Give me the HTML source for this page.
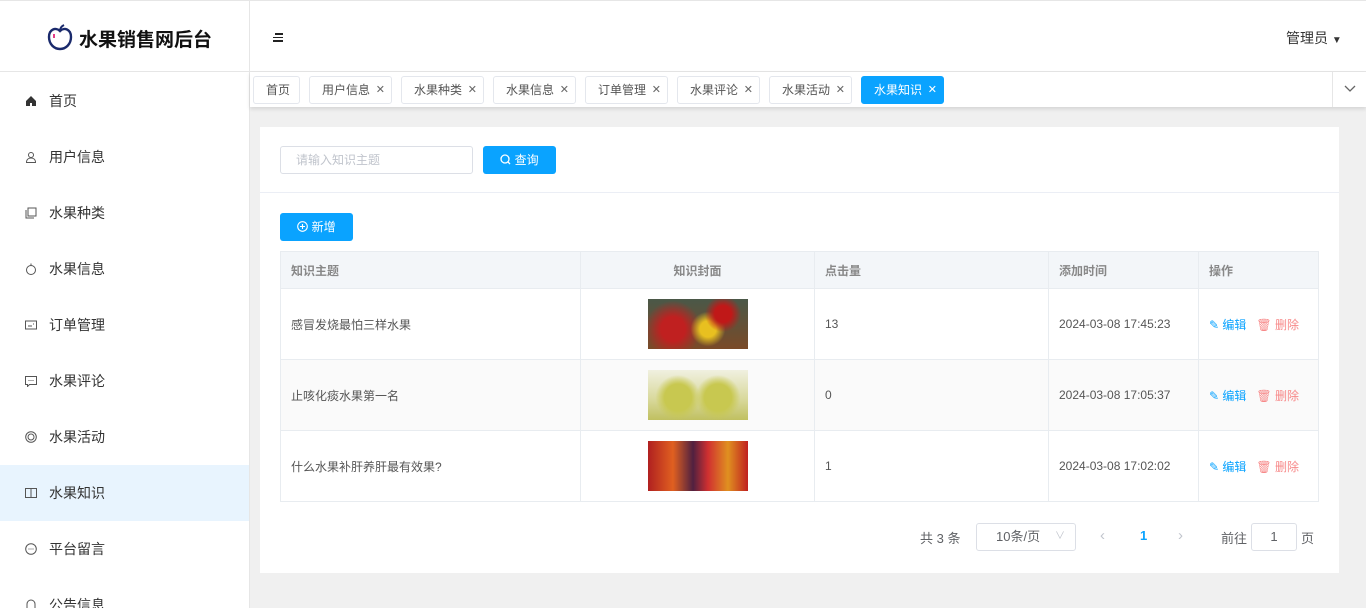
<!DOCTYPE html>
<html><head><meta charset="utf-8"><style>
*{margin:0;padding:0;box-sizing:border-box}
html{width:1366px;height:608px;overflow:hidden}
body{width:1366px;height:608px;overflow:hidden;background:#f0f0f0;font-family:"Liberation Sans","Noto Sans CJK SC",sans-serif;font-size:13px;color:#333;position:relative}
.abs{position:absolute}
.side{left:0;top:0;width:250px;height:608px;background:#fff;border-right:1px solid #e6e6e6;overflow:hidden}
.logo{left:0;top:0;width:249px;height:72px;border-bottom:1px solid #e6e6e6;border-top:1px solid #e6e6e6}
.mi{left:0;width:249px;height:56px;line-height:56px;padding-left:49px;font-size:14px;color:#333}
.mi svg{position:absolute;left:25px;top:22px}
.top{left:250px;top:0;width:1116px;height:72px;background:#fff;border-bottom:1px solid #e6e6e6;border-top:1px solid #e6e6e6}
.tabs{left:250px;top:72px;width:1116px;height:35px;background:#fff;box-shadow:0 2px 4px rgba(0,0,0,.12)}
.tab{top:4px;height:28px;line-height:26px;border:1px solid #e4e7ed;border-radius:3px;font-size:12px;color:#555;padding-left:12px;background:#fff}
.tab i{position:absolute;right:6px;top:0;font-style:normal;color:#666;font-size:11px}
.tab.on{background:#0aa3ff;color:#fff;border-color:#0aa3ff}.tab.on i{color:#fff}
.card{left:260px;top:127px;width:1079px;height:446px;background:#fff}
.btn{background:#0aa3ff;color:#fff;border-radius:3px;font-size:12px;text-align:center}
table{position:absolute;left:280px;top:251px;width:1039px;border-collapse:collapse;font-size:12px}
td,th{border:1px solid #e8ecf0;padding:0 10px;color:#555;font-weight:normal;text-align:left}
th{height:37px;background:#f3f6f9;color:#888;font-weight:bold}
td{height:71px}
tr.alt td{background:#fafafa}
.img{width:100px;height:50px;margin:0 auto}
.ed{color:#0aa3ff}.de{color:#f78989;margin-left:10px}
</style></head><body>
<div class="abs side">
<div class="abs logo">
<svg class="abs" style="left:47px;top:22px" width="26" height="28" viewBox="0 0 26 28"><path d="M13 8C9 4 2 6 2 14c0 7 5 12 11 12s11-5 11-12c0-8-7-10-11-6z" fill="none" stroke="#1a2a6c" stroke-width="2.4"/><path d="M13 8c0-3 2-5 4-6" stroke="#1a2a6c" stroke-width="2" fill="none"/><path d="M7 11v4" stroke="#e0287a" stroke-width="1.8"/></svg>
<div class="abs" style="left:79px;top:24px;font-size:19px;font-weight:bold;color:#111">水果销售网后台</div>
</div>
<div class="abs mi" style="top:73px"><svg width="12" height="12" viewBox="0 0 12 12"><path d="M1 6L6 1l5 5v5H7V8H5v3H1z" fill="#333"/></svg>首页</div>
<div class="abs mi" style="top:129px"><svg width="12" height="12" viewBox="0 0 12 12" fill="none" stroke="#555"><circle cx="6" cy="4" r="2.5"/><path d="M1.5 11.5c0-3 2-4.5 4.5-4.5s4.5 1.5 4.5 4.5z"/></svg>用户信息</div>
<div class="abs mi" style="top:185px"><svg width="12" height="12" viewBox="0 0 12 12" fill="none" stroke="#555"><rect x="3" y="1" width="8" height="8"/><path d="M1 3v8h8"/></svg>水果种类</div>
<div class="abs mi" style="top:241px"><svg width="12" height="12" viewBox="0 0 12 12" fill="none" stroke="#555"><circle cx="6" cy="7" r="4.5"/><path d="M6 2.5V0.5"/></svg>水果信息</div>
<div class="abs mi" style="top:297px"><svg width="12" height="12" viewBox="0 0 12 12" fill="none" stroke="#555"><rect x="0.5" y="2" width="11" height="8"/><path d="M3 7h4M8 5h1"/></svg>订单管理</div>
<div class="abs mi" style="top:353px"><svg width="12" height="12" viewBox="0 0 12 12" fill="none" stroke="#555"><path d="M0.5 1.5h11v8h-7l-2 2v-2h-2z"/><path d="M3.5 5.5h1M5.5 5.5h1M7.5 5.5h1"/></svg>水果评论</div>
<div class="abs mi" style="top:409px"><svg width="12" height="12" viewBox="0 0 12 12" fill="none" stroke="#555"><circle cx="6" cy="6" r="5.3"/><circle cx="6" cy="6" r="3"/></svg>水果活动</div>
<div class="abs mi" style="top:465px;background:#e8f4fe"><svg width="12" height="12" viewBox="0 0 12 12" fill="none" stroke="#555"><rect x="0.5" y="1.5" width="11" height="9"/><path d="M6 1.5v9"/></svg>水果知识</div>
<div class="abs mi" style="top:521px"><svg width="12" height="12" viewBox="0 0 12 12" fill="none" stroke="#555"><circle cx="6" cy="6" r="5.3"/><path d="M3.5 6h1M5.5 6h1M7.5 6h1"/></svg>平台留言</div>
<div class="abs mi" style="top:577px"><svg width="12" height="12" viewBox="0 0 12 12" fill="none" stroke="#555"><path d="M2 10V5a4 4 0 018 0v5z"/></svg>公告信息</div>
</div>

<div class="abs top">
<div class="abs" style="left:23px;top:32px;width:10px"><div style="height:1.5px;background:#222;margin-bottom:2px;margin-left:2px"></div><div style="height:1.5px;background:#222;margin-bottom:2px"></div><div style="height:1.5px;background:#222"></div></div>
<div class="abs" style="left:1036px;top:27px;font-size:14px;color:#333">管理员 <span style="font-size:10px">▼</span></div>
</div>
<div class="abs tabs">
<div class="abs tab" style="left:3px;width:47px">首页</div>
<div class="abs tab" style="left:59px;width:83px">用户信息<i>✕</i></div>
<div class="abs tab" style="left:151px;width:83px">水果种类<i>✕</i></div>
<div class="abs tab" style="left:243px;width:83px">水果信息<i>✕</i></div>
<div class="abs tab" style="left:335px;width:83px">订单管理<i>✕</i></div>
<div class="abs tab" style="left:427px;width:83px">水果评论<i>✕</i></div>
<div class="abs tab" style="left:519px;width:83px">水果活动<i>✕</i></div>
<div class="abs tab on" style="left:611px;width:83px">水果知识<i>✕</i></div>
<div class="abs" style="left:1082px;top:0;width:34px;height:35px;border-left:1px solid #e6e6e6"><svg class="abs" style="left:11px;top:13px" width="12" height="8" viewBox="0 0 12 8"><path d="M1 1l5 5 5-5" fill="none" stroke="#666" stroke-width="1.3"/></svg></div>
</div>

<div class="abs card"></div>
<div class="abs" style="left:260px;top:192px;width:1079px;height:1px;background:#ebeef5"></div>
<div class="abs" style="left:280px;top:146px;width:193px;height:28px;border:1px solid #dcdfe6;border-radius:3px;font-size:12px;color:#c0c4cc;line-height:26px;padding-left:15px">请输入知识主题</div>
<div class="abs btn" style="left:483px;top:146px;width:73px;height:28px;line-height:28px"><svg width="11" height="11" viewBox="0 0 11 11" style="vertical-align:-1px" fill="none" stroke="#fff" stroke-width="1.3"><circle cx="5" cy="5" r="4"/><path d="M8 8l2 2"/></svg> 查询</div>
<div class="abs btn" style="left:280px;top:213px;width:73px;height:28px;line-height:28px"><svg width="11" height="11" viewBox="0 0 11 11" style="vertical-align:-1px" fill="none" stroke="#fff" stroke-width="1.1"><circle cx="5.5" cy="5.5" r="4.8"/><path d="M5.5 3v5M3 5.5h5"/></svg> 新增</div>

<table>
<tr><th style="width:300px;height:36px">知识主题</th><th style="width:234px;text-align:center">知识封面</th><th style="width:234px">点击量</th><th style="width:150px">添加时间</th><th>操作</th></tr>
<tr><td style="height:70px">感冒发烧最怕三样水果</td><td><div class="img" style="background:radial-gradient(circle at 75% 30%,#c01818 10%,transparent 22%),radial-gradient(circle at 60% 60%,#e8c020 12%,transparent 26%),radial-gradient(circle at 25% 60%,#c02020 15%,transparent 35%),linear-gradient(#4a5848,#7a4a28)"></div></td><td>13</td><td>2024-03-08 17:45:23</td><td><span class="ed">✎ 编辑</span><span class="de">🗑 删除</span></td></tr>
<tr class="alt"><td style="height:70px">止咳化痰水果第一名</td><td><div class="img" style="background:radial-gradient(circle at 30% 55%,#c8c850 18%,transparent 30%),radial-gradient(circle at 70% 55%,#c8c850 18%,transparent 30%),linear-gradient(#f0f0e0,#d8d89a 60%,#c0c060)"></div></td><td>0</td><td>2024-03-08 17:05:37</td><td><span class="ed">✎ 编辑</span><span class="de">🗑 删除</span></td></tr>
<tr><td style="height:70px">什么水果补肝养肝最有效果?</td><td><div class="img" style="background:linear-gradient(90deg,#b02020,#e06020 25%,#502040 45%,#d03030 60%,#e09020 80%,#c02020)"></div></td><td>1</td><td>2024-03-08 17:02:02</td><td><span class="ed">✎ 编辑</span><span class="de">🗑 删除</span></td></tr>
</table>

<div class="abs" style="left:920px;top:528px;color:#606266">共 3 条</div>
<div class="abs" style="left:976px;top:523px;width:100px;height:28px;border:1px solid #dcdfe6;border-radius:3px;line-height:26px;padding-left:19px;color:#606266">10条/页<span style="position:absolute;right:10px;color:#c0c4cc;font-size:10px">∨</span></div>
<div class="abs" style="left:1100px;top:527px;color:#c0c4cc;font-size:15px">‹</div>
<div class="abs" style="left:1140px;top:528px;color:#0aa3ff;font-weight:bold">1</div>
<div class="abs" style="left:1178px;top:527px;color:#c0c4cc;font-size:15px">›</div>
<div class="abs" style="left:1221px;top:528px;color:#606266">前往</div>
<div class="abs" style="left:1251px;top:523px;width:46px;height:28px;border:1px solid #dcdfe6;border-radius:3px;text-align:center;line-height:26px;color:#606266">1</div>
<div class="abs" style="left:1301px;top:528px;color:#606266">页</div>
</body></html>
